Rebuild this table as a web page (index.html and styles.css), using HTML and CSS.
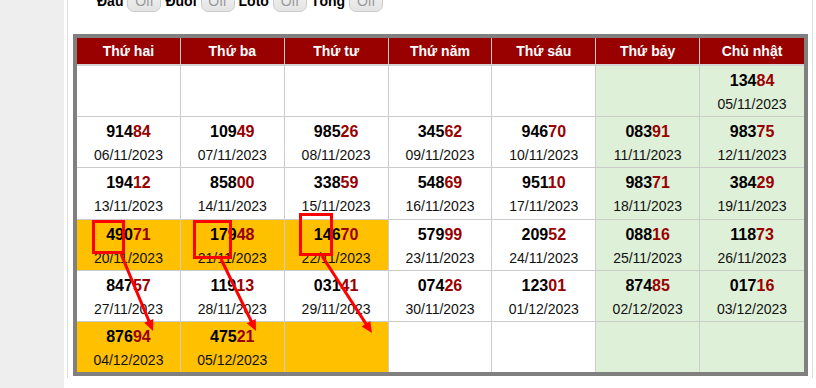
FILE: index.html
```html
<!DOCTYPE html>
<html lang="vi">
<head>
<meta charset="utf-8">
<title>Lịch</title>
<link rel="stylesheet" href="styles.css">
</head>
<body>
<div class="stage">
  <aside class="sidebar"></aside>
  <main class="main">
    <div class="panel">
      <div class="toolbar">
        <span class="lbl">Đầu</span><span class="toggle">Off</span>
        <span class="lbl">Đuôi</span><span class="toggle">Off</span>
        <span class="lbl">Loto</span><span class="toggle">Off</span>
        <span class="lbl">Tổng</span><span class="toggle">Off</span>
      </div>
      <table class="cal">
        <thead>
          <tr><th>Thứ hai</th><th>Thứ ba</th><th>Thứ tư</th><th>Thứ năm</th><th>Thứ sáu</th><th>Thứ bảy</th><th>Chủ nhật</th></tr>
        </thead>
        <tbody>
          <tr>
            <td></td><td></td><td></td><td></td><td></td><td class="g"></td>
            <td class="g"><div class="n">134<span class="r">84</span></div><div class="d">05/11/2023</div></td>
          </tr>
          <tr>
            <td><div class="n">914<span class="r">84</span></div><div class="d">06/11/2023</div></td>
            <td><div class="n">109<span class="r">49</span></div><div class="d">07/11/2023</div></td>
            <td><div class="n">985<span class="r">26</span></div><div class="d">08/11/2023</div></td>
            <td><div class="n">345<span class="r">62</span></div><div class="d">09/11/2023</div></td>
            <td><div class="n">946<span class="r">70</span></div><div class="d">10/11/2023</div></td>
            <td class="g"><div class="n">083<span class="r">91</span></div><div class="d">11/11/2023</div></td>
            <td class="g"><div class="n">983<span class="r">75</span></div><div class="d">12/11/2023</div></td>
          </tr>
          <tr>
            <td><div class="n">194<span class="r">12</span></div><div class="d">13/11/2023</div></td>
            <td><div class="n">858<span class="r">00</span></div><div class="d">14/11/2023</div></td>
            <td><div class="n">338<span class="r">59</span></div><div class="d">15/11/2023</div></td>
            <td><div class="n">548<span class="r">69</span></div><div class="d">16/11/2023</div></td>
            <td><div class="n">951<span class="r">10</span></div><div class="d">17/11/2023</div></td>
            <td class="g"><div class="n">983<span class="r">71</span></div><div class="d">18/11/2023</div></td>
            <td class="g"><div class="n">384<span class="r">29</span></div><div class="d">19/11/2023</div></td>
          </tr>
          <tr>
            <td class="y"><div class="n">490<span class="r">71</span></div><div class="d">20/11/2023</div></td>
            <td class="y"><div class="n">179<span class="r">48</span></div><div class="d">21/11/2023</div></td>
            <td class="y"><div class="n">146<span class="r">70</span></div><div class="d">22/11/2023</div></td>
            <td><div class="n">579<span class="r">99</span></div><div class="d">23/11/2023</div></td>
            <td><div class="n">209<span class="r">52</span></div><div class="d">24/11/2023</div></td>
            <td class="g"><div class="n">088<span class="r">16</span></div><div class="d">25/11/2023</div></td>
            <td class="g"><div class="n">118<span class="r">73</span></div><div class="d">26/11/2023</div></td>
          </tr>
          <tr>
            <td><div class="n">847<span class="r">57</span></div><div class="d">27/11/2023</div></td>
            <td><div class="n">119<span class="r">13</span></div><div class="d">28/11/2023</div></td>
            <td><div class="n">031<span class="r">41</span></div><div class="d">29/11/2023</div></td>
            <td><div class="n">074<span class="r">26</span></div><div class="d">30/11/2023</div></td>
            <td><div class="n">123<span class="r">01</span></div><div class="d">01/12/2023</div></td>
            <td class="g"><div class="n">874<span class="r">85</span></div><div class="d">02/12/2023</div></td>
            <td class="g"><div class="n">017<span class="r">16</span></div><div class="d">03/12/2023</div></td>
          </tr>
          <tr class="last">
            <td class="y"><div class="n">876<span class="r">94</span></div><div class="d">04/12/2023</div></td>
            <td class="y"><div class="n">475<span class="r">21</span></div><div class="d">05/12/2023</div></td>
            <td class="y"></td>
            <td></td><td></td><td class="g"></td><td class="g"></td>
          </tr>
        </tbody>
      </table>
    </div>
  </main>
  <svg class="overlay" width="816" height="388" viewBox="0 0 816 388">
    <g fill="none" stroke="#f00" stroke-width="3">
      <rect x="93.5" y="221.5" width="30" height="31"/>
      <rect x="194.5" y="221.5" width="36" height="36"/>
      <rect x="300.5" y="214.5" width="31" height="40"/>
      <line x1="121" y1="254" x2="149.2" y2="321.7"/>
      <line x1="221" y1="259" x2="251.6" y2="322"/>
      <line x1="322" y1="256" x2="366.5" y2="324.6"/>
    </g>
    <g fill="#f00">
      <polygon points="153,331 144.2,322.7 153.4,318.9"/>
      <polygon points="256,331 246.7,323.3 255.7,318.9"/>
      <polygon points="372,333 361.8,326.5 370.2,321.1"/>
    </g>
  </svg>
</div>
</body>
</html>
```
FILE: styles.css
```css
body {
  margin: 0;
  font-family: "Liberation Sans", Arial, sans-serif;
  color: #000;
}

.stage {
  position: relative;
  display: flex;
  width: 816px;
  height: 388px;
  overflow: hidden;
  background: #fff;
}

.sidebar {
  flex: none;
  width: 64px;
  background: #eeeeee;
}

.main {
  flex: none;
  padding-left: 3px;
}

.panel {
  width: 739px;
  height: 388px;
  padding-left: 5px;
  border-left: 1px solid #dddddd;
  border-right: 1px solid #dddddd;
}

.toolbar {
  display: flex;
  align-items: center;
  gap: 4px;
  height: 22px;
  margin: -10px 0 0 24px;
}

.lbl {
  font-weight: bold;
  font-size: 14px;
  line-height: 20px;
}

.toggle {
  box-sizing: border-box;
  width: 34px;
  height: 22px;
  border: 1px solid #cccccc;
  border-radius: 7px;
  background: linear-gradient(#f2f2f2, #e4e4e4);
  color: #999999;
  font-size: 14px;
  line-height: 20px;
  text-align: center;
}

.cal {
  margin-top: 22px;
  width: 735px;
  table-layout: fixed;
  border-collapse: separate;
  border-spacing: 0;
  border: 4px solid #808080;
}

.cal th {
  height: 26px;
  padding: 0;
  background: #990000;
  color: #fff;
  font-size: 14px;
  font-weight: bold;
  line-height: 26px;
  text-align: center;
  border-right: 1px solid #cccccc;
  border-bottom: 2px solid #d4d4d4;
}

.cal td {
  box-sizing: border-box;
  height: 51.2px;
  padding: 5px 0 0;
  vertical-align: top;
  text-align: center;
  background: #fff;
  border-right: 1px solid #cccccc;
  border-bottom: 1px solid #cccccc;
}

.cal th:last-child,
.cal td:last-child {
  border-right: none;
}

.cal tr.last td {
  height: 50.2px;
  border-bottom: none;
}

.cal td.g {
  background: #dff0d8;
}

.cal td.y {
  background: #ffc000;
}

.n {
  font-size: 16px;
  font-weight: bold;
  line-height: 20px;
}

.r {
  color: #990000;
}

.d {
  margin-top: 3px;
  font-size: 14px;
  line-height: 20px;
  color: #111;
}

.overlay {
  position: absolute;
  left: 0;
  top: 0;
  pointer-events: none;
}
```
